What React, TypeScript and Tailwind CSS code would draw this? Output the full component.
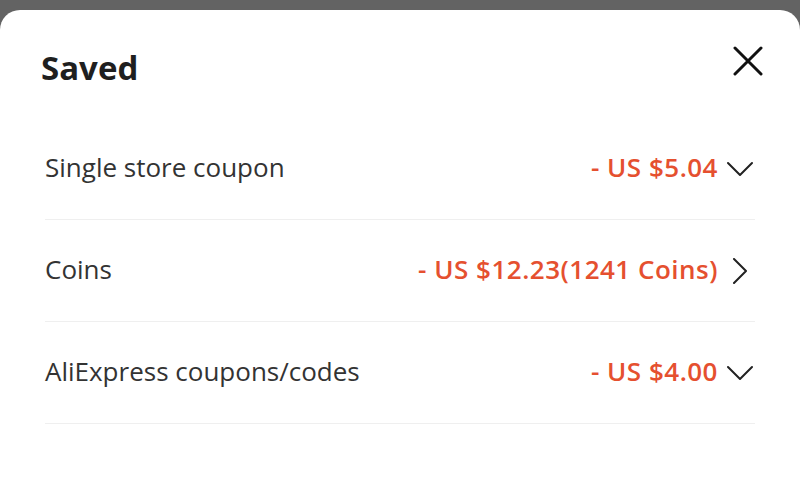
import React from 'react';

const rows = [
  { label: 'Single store coupon', value: '- US $5.04', icon: 'down' },
  { label: 'Coins', value: '- US $12.23(1241 Coins)', icon: 'right' },
  { label: 'AliExpress coupons/codes', value: '- US $4.00', icon: 'down' },
] as const;

function Chevron({ dir }: { dir: 'down' | 'right' }) {
  return (
    <svg width="26" height="26" viewBox="0 0 26 26" fill="none" stroke="#222" strokeWidth="2" strokeLinecap="round" strokeLinejoin="round">
      {dir === 'down' ? <path d="M1 7l12 12 12-12" /> : <path d="M7 1l12 12-12 12" />}
    </svg>
  );
}

export default function App() {
  return (
    <div className="w-[800px] h-[491px] bg-[#636363] pt-[10px] overflow-hidden" style={{ fontFamily: '"Open Sans", Lato, sans-serif' }}>
      <div className="h-[481px] bg-white rounded-t-[20px]">
        {/* Header */}
        <div className="h-[108px] flex items-start justify-between pl-[41px] pr-[37px] pt-[38px]">
          <h1 className="text-[33px] leading-[40px] font-bold text-[#1f1f1f]">Saved</h1>
          <button className="w-[30px] h-[30px] -mt-[2px] flex items-center justify-center">
            <svg width="30" height="30" viewBox="0 0 30 30" fill="none" stroke="#111" strokeWidth="3" strokeLinecap="round">
              <path d="M2 2l26 26M28 2L2 28" />
            </svg>
          </button>
        </div>

        {/* Rows */}
        <div className="px-[45px]">
          {rows.map((r) => (
            <div key={r.label} className="h-[102px] flex items-center justify-between border-b border-[#efefef]">
              <span className="text-[26px] text-[#333] font-medium -mt-[3px]">{r.label}</span>
              <div className="flex items-center gap-[9px] mr-[2px]">
                <span className="text-[26px] font-semibold tracking-[0.5px] text-[#e5502f] -mt-[3px]">{r.value}</span>
                <Chevron dir={r.icon} />
              </div>
            </div>
          ))}
        </div>
      </div>
    </div>
  );
}
